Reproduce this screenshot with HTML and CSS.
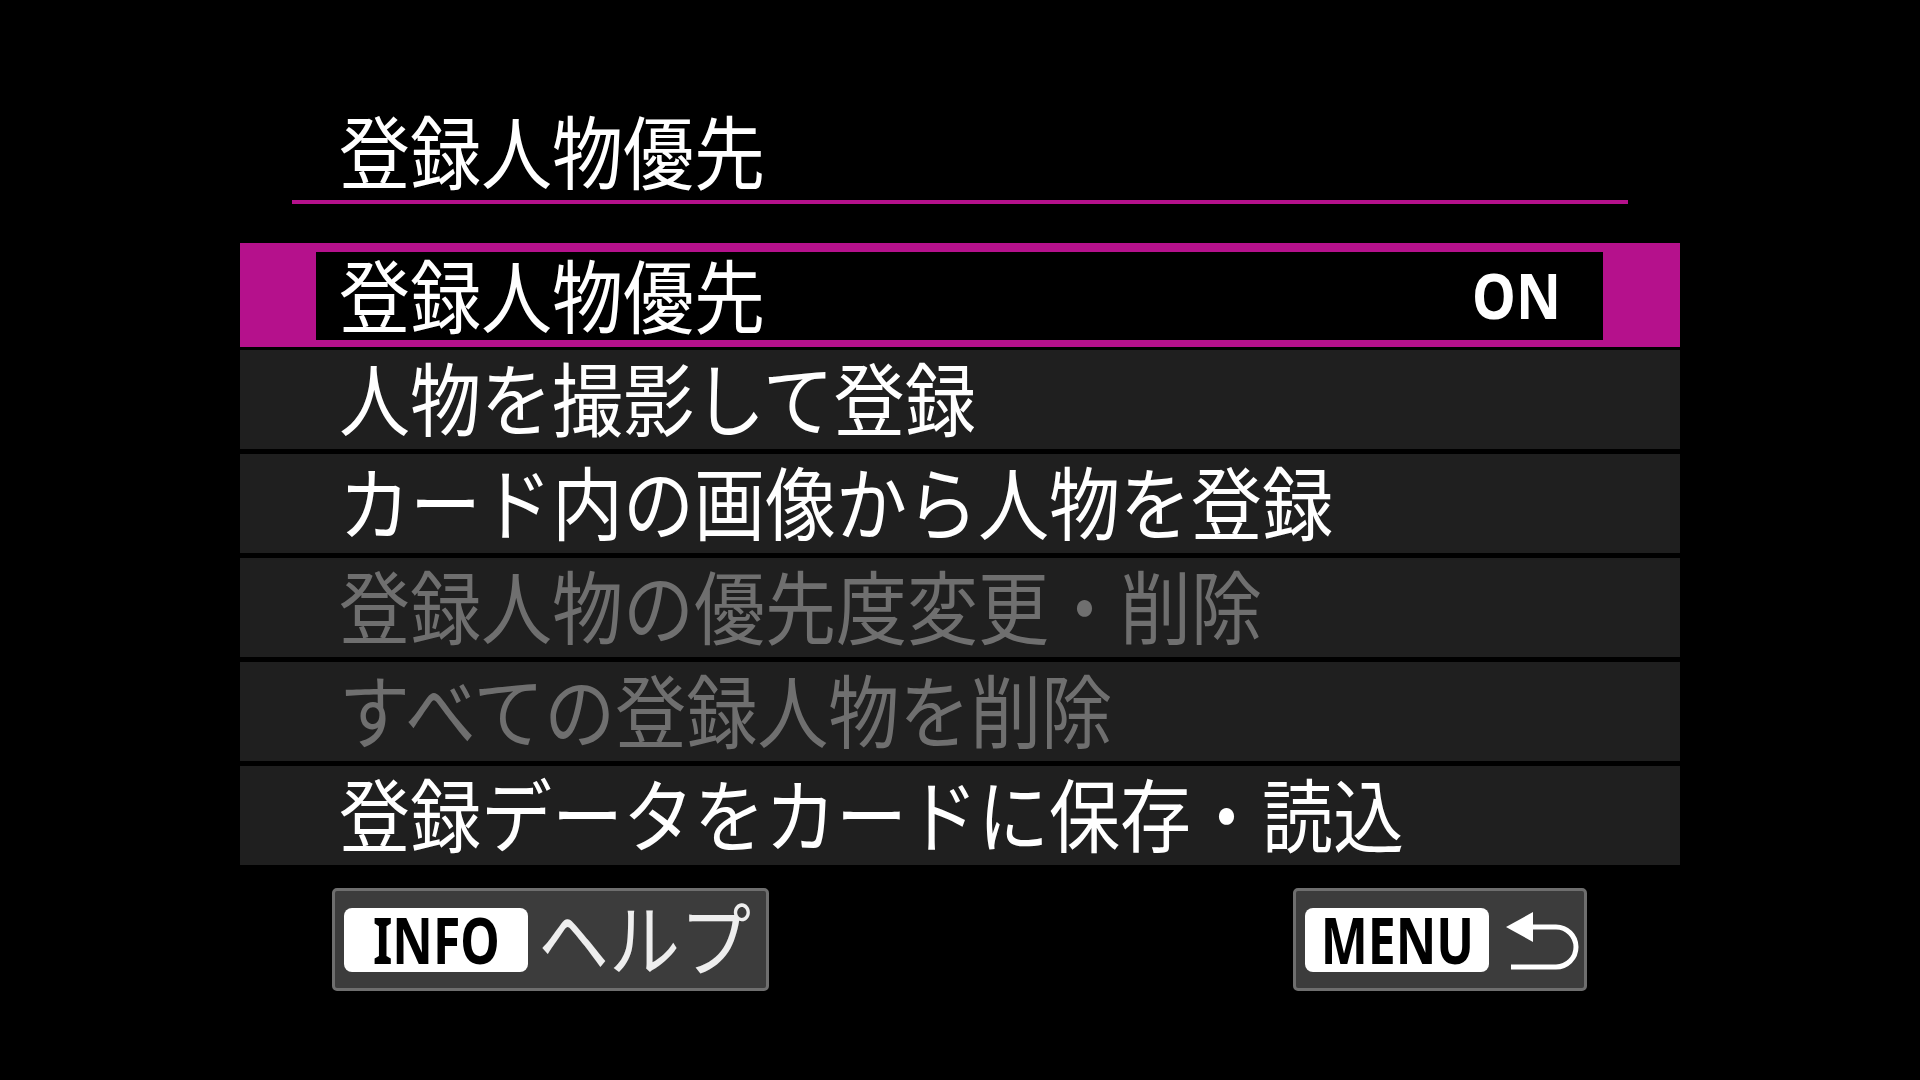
FILE: index.html
```html
<!DOCTYPE html>
<html lang="ja">
<head>
<meta charset="utf-8">
<title>登録人物優先</title>
<link rel="stylesheet" href="styles.css">
</head>
<body>
<div class="screen">
  <div class="title"><span class="jp">登録人物優先</span></div>
  <ul class="menu">
    <li class="item selected">
      <div class="inner"><span class="jp">登録人物優先</span><span class="value">ON</span></div>
    </li>
    <li class="item"><span class="jp">人物を撮影して登録</span></li>
    <li class="item"><span class="jp">カード内の画像から人物を登録</span></li>
    <li class="item disabled"><span class="jp">登録人物の優先度変更・削除</span></li>
    <li class="item disabled"><span class="jp">すべての登録人物を削除</span></li>
    <li class="item"><span class="jp">登録データをカードに保存・読込</span></li>
  </ul>
  <div class="footer">
    <div class="btn info">
      <span class="key"><span class="key-text">INFO</span></span>
      <span class="jp help">ヘルプ</span>
    </div>
    <div class="btn back">
      <span class="key"><span class="key-text">MENU</span></span>
      <svg class="return-icon" width="76" height="64" viewBox="0 0 76 64" aria-hidden="true">
        <polygon points="2,19 29,4 29,34" fill="#fff"/>
        <path d="M28 19 H52 A20 20 0 0 1 52 59 H7" fill="none" stroke="#fff" stroke-width="5"/>
      </svg>
    </div>
  </div>
</div>
</body>
</html>
```
FILE: styles.css
```css
html, body {
  margin: 0;
  padding: 0;
  background: #000;
}

body {
  width: 1920px;
  height: 1080px;
  overflow: hidden;
  font-family: "Noto Sans CJK JP", "Noto Sans", sans-serif;
  color: #fff;
}

.screen {
  padding-top: 104px;
}

.jp {
  display: inline-block;
  font-size: 71px;
  line-height: 1;
  white-space: nowrap;
  transform: translateY(-4px) scaleY(1.12);
}

.title {
  box-sizing: border-box;
  margin-left: 292px;
  width: 1336px;
  height: 100px;
  padding-left: 47px;
  border-bottom: 4px solid #b5118c;
  display: flex;
  align-items: center;
}

.menu {
  list-style: none;
  margin: 39px 0 0 240px;
  padding: 0;
  width: 1440px;
  display: flex;
  flex-direction: column;
  gap: 5px;
}

.item {
  box-sizing: border-box;
  height: 99px;
  background: #1f1f1f;
  display: flex;
  align-items: center;
  padding-left: 99px;
}

.item.disabled {
  color: #6f6f6f;
}

.item.selected {
  height: 104px;
  background: #b5118c;
  padding: 9px 77px 7px 76px;
  margin-bottom: -2px;
}

.inner {
  box-sizing: border-box;
  flex: 1;
  height: 88px;
  background: #000;
  display: flex;
  align-items: center;
  justify-content: space-between;
  padding: 0 36px 0 23px;
}

.value {
  display: inline-block;
  font-family: "Noto Sans", sans-serif;
  font-weight: 700;
  font-size: 63px;
  line-height: 1;
  transform: translateY(-2px) scaleX(0.88);
}

.footer {
  margin: 23px 0 0 332px;
  width: 1255px;
  display: flex;
  justify-content: space-between;
}

.btn {
  box-sizing: border-box;
  height: 103px;
  border: 3px solid #6e6e6e;
  border-radius: 5px;
  background: #3c3c3c;
  display: flex;
  align-items: center;
  padding-left: 9px;
}

.info {
  width: 437px;
}

.back {
  width: 294px;
}

.key {
  width: 184px;
  height: 64px;
  background: #fff;
  border-radius: 8px;
  display: flex;
  align-items: center;
  justify-content: center;
  color: #000;
}

.key-text {
  display: inline-block;
  font-family: "Noto Sans", sans-serif;
  font-weight: 700;
  font-size: 64px;
  line-height: 1;
  transform: scaleX(0.78);
}

.help {
  margin-left: 10px;
  color: #eeeeee;
}

.return-icon {
  margin-left: 15px;
}
```
